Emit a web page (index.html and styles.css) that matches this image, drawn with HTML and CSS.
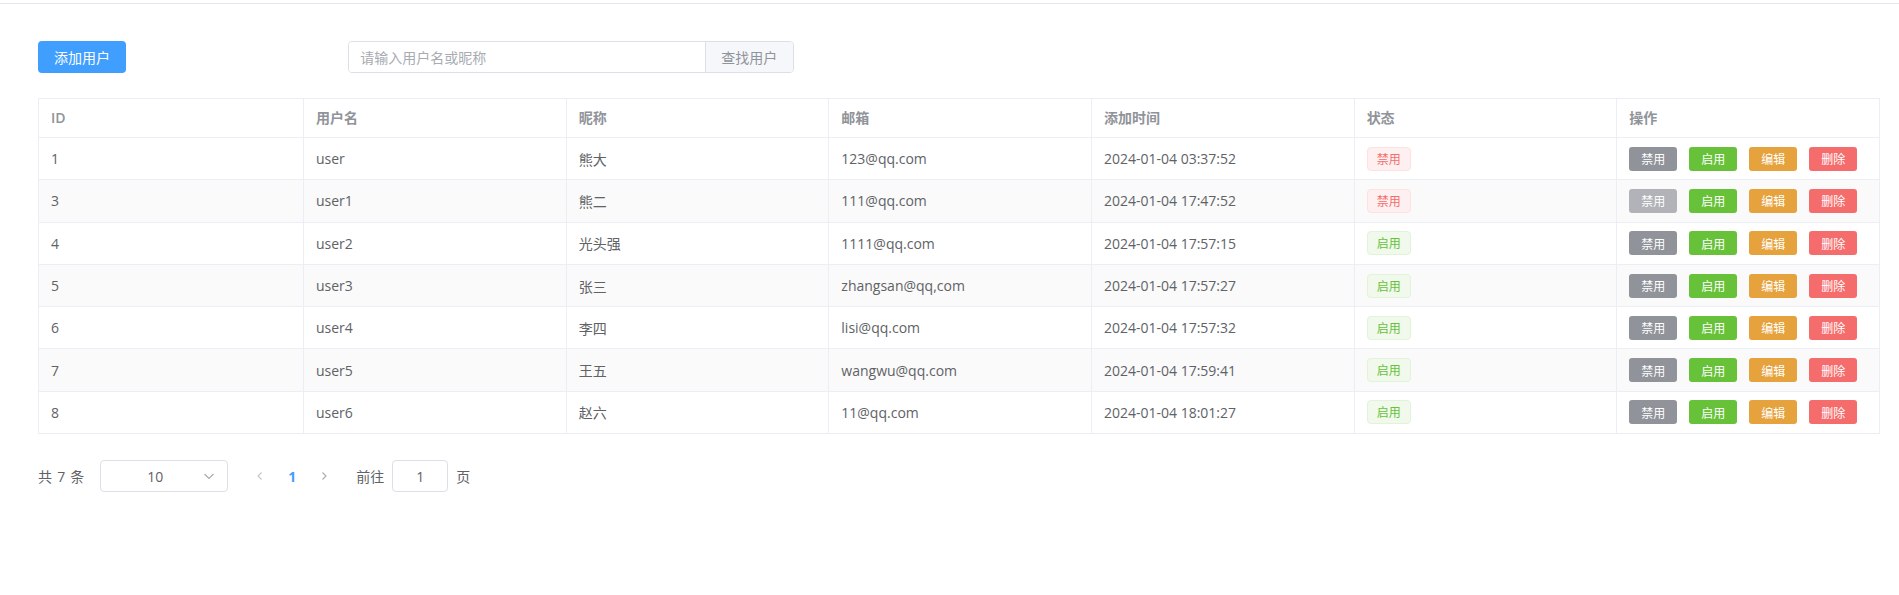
FILE: index.html
```html
<!DOCTYPE html>
<html lang="zh-CN">
<head>
<meta charset="utf-8">
<title>用户管理</title>
<link rel="stylesheet" href="styles.css">
</head>
<body>
<div class="topbar"></div>
<main class="page">
  <div class="toolbar">
    <div class="col-add"><button class="btn btn-primary">添加用户</button></div>
    <div class="search">
      <input class="search-input" type="text" placeholder="请输入用户名或昵称">
      <button class="search-append">查找用户</button>
    </div>
  </div>

  <table class="grid">
    <colgroup>
      <col class="col-first">
      <col><col><col><col><col><col>
    </colgroup>
    <thead>
      <tr>
        <th><div class="cell">ID</div></th>
        <th><div class="cell">用户名</div></th>
        <th><div class="cell">昵称</div></th>
        <th><div class="cell">邮箱</div></th>
        <th><div class="cell">添加时间</div></th>
        <th><div class="cell">状态</div></th>
        <th><div class="cell">操作</div></th>
      </tr>
    </thead>
    <tbody>
      <tr>
        <td><div class="cell">1</div></td>
        <td><div class="cell">user</div></td>
        <td><div class="cell">熊大</div></td>
        <td><div class="cell">123@qq.com</div></td>
        <td><div class="cell">2024-01-04 03:37:52</div></td>
        <td><div class="cell"><span class="tag tag-danger">禁用</span></div></td>
        <td><div class="cell ops"><button class="btn-s info">禁用</button><button class="btn-s success">启用</button><button class="btn-s warning">编辑</button><button class="btn-s danger">删除</button></div></td>
      </tr>
      <tr class="stripe">
        <td><div class="cell">3</div></td>
        <td><div class="cell">user1</div></td>
        <td><div class="cell">熊二</div></td>
        <td><div class="cell">111@qq.com</div></td>
        <td><div class="cell">2024-01-04 17:47:52</div></td>
        <td><div class="cell"><span class="tag tag-danger">禁用</span></div></td>
        <td><div class="cell ops"><button class="btn-s info disabled">禁用</button><button class="btn-s success">启用</button><button class="btn-s warning">编辑</button><button class="btn-s danger">删除</button></div></td>
      </tr>
      <tr>
        <td><div class="cell">4</div></td>
        <td><div class="cell">user2</div></td>
        <td><div class="cell">光头强</div></td>
        <td><div class="cell">1111@qq.com</div></td>
        <td><div class="cell">2024-01-04 17:57:15</div></td>
        <td><div class="cell"><span class="tag tag-success">启用</span></div></td>
        <td><div class="cell ops"><button class="btn-s info">禁用</button><button class="btn-s success">启用</button><button class="btn-s warning">编辑</button><button class="btn-s danger">删除</button></div></td>
      </tr>
      <tr class="stripe">
        <td><div class="cell">5</div></td>
        <td><div class="cell">user3</div></td>
        <td><div class="cell">张三</div></td>
        <td><div class="cell">zhangsan@qq,com</div></td>
        <td><div class="cell">2024-01-04 17:57:27</div></td>
        <td><div class="cell"><span class="tag tag-success">启用</span></div></td>
        <td><div class="cell ops"><button class="btn-s info">禁用</button><button class="btn-s success">启用</button><button class="btn-s warning">编辑</button><button class="btn-s danger">删除</button></div></td>
      </tr>
      <tr>
        <td><div class="cell">6</div></td>
        <td><div class="cell">user4</div></td>
        <td><div class="cell">李四</div></td>
        <td><div class="cell">lisi@qq.com</div></td>
        <td><div class="cell">2024-01-04 17:57:32</div></td>
        <td><div class="cell"><span class="tag tag-success">启用</span></div></td>
        <td><div class="cell ops"><button class="btn-s info">禁用</button><button class="btn-s success">启用</button><button class="btn-s warning">编辑</button><button class="btn-s danger">删除</button></div></td>
      </tr>
      <tr class="stripe">
        <td><div class="cell">7</div></td>
        <td><div class="cell">user5</div></td>
        <td><div class="cell">王五</div></td>
        <td><div class="cell">wangwu@qq.com</div></td>
        <td><div class="cell">2024-01-04 17:59:41</div></td>
        <td><div class="cell"><span class="tag tag-success">启用</span></div></td>
        <td><div class="cell ops"><button class="btn-s info">禁用</button><button class="btn-s success">启用</button><button class="btn-s warning">编辑</button><button class="btn-s danger">删除</button></div></td>
      </tr>
      <tr>
        <td><div class="cell">8</div></td>
        <td><div class="cell">user6</div></td>
        <td><div class="cell">赵六</div></td>
        <td><div class="cell">11@qq.com</div></td>
        <td><div class="cell">2024-01-04 18:01:27</div></td>
        <td><div class="cell"><span class="tag tag-success">启用</span></div></td>
        <td><div class="cell ops"><button class="btn-s info">禁用</button><button class="btn-s success">启用</button><button class="btn-s warning">编辑</button><button class="btn-s danger">删除</button></div></td>
      </tr>
    </tbody>
  </table>

  <div class="pager">
    <span class="total">共 7 条</span>
    <div class="sizes">
      <span class="sizes-value">10</span>
      <svg class="sizes-arrow" width="14" height="14" viewBox="0 0 14 14"><path d="M2.5 5 L7 9.5 L11.5 5" fill="none" stroke="#a8abb2" stroke-width="1.2"/></svg>
    </div>
    <button class="pg-btn" aria-label="上一页"><svg width="12" height="12" viewBox="0 0 12 12"><path d="M7.5 2.5 L4 6 L7.5 9.5" fill="none" stroke="#c0c4cc" stroke-width="1.1"/></svg></button>
    <span class="pg-num">1</span>
    <button class="pg-btn" aria-label="下一页"><svg width="12" height="12" viewBox="0 0 12 12"><path d="M4.5 2.5 L8 6 L4.5 9.5" fill="none" stroke="#a8abb2" stroke-width="1.1"/></svg></button>
    <span class="jump">前往</span>
    <input class="jump-input" type="text" value="1">
    <span class="jump-page">页</span>
  </div>
</main>
</body>
</html>
```

FILE: styles.css
```css
* { box-sizing: border-box; }

body {
  margin: 0;
  background: #fff;
  font-family: "Open Sans", "Noto Sans CJK SC", sans-serif;
  font-size: 14px;
  color: #606266;
}

.topbar {
  height: 4px;
  border-bottom: 1px solid #e4e7ed;
}

.page {
  padding: 37px 19px 0 38px;
}

.toolbar {
  display: flex;
  align-items: center;
  height: 32px;
}

.col-add {
  width: 310.3px;
  flex: none;
}

.btn {
  font-family: inherit;
  border: none;
  cursor: pointer;
}

.btn-primary {
  height: 32px;
  padding: 0 16px;
  background: #409eff;
  color: #fff;
  font-size: 14px;
  border-radius: 4px;
  font-family: "Noto Sans CJK SC", sans-serif;
}

.search {
  display: flex;
  width: 445.5px;
  height: 32px;
  border: 1px solid #dcdfe6;
  border-radius: 4px;
  overflow: hidden;
}

.search-input {
  flex: 1;
  min-width: 0;
  border: none;
  outline: none;
  padding: 0 11px;
  font-size: 14px;
  font-family: "Noto Sans CJK SC", sans-serif;
  color: #606266;
  background: #fff;
}

.search-input::placeholder {
  color: #a8abb2;
}

.search-append {
  width: 88px;
  flex: none;
  border: none;
  border-left: 1px solid #dcdfe6;
  background: #f5f7fa;
  color: #909399;
  font-size: 14px;
  font-family: "Noto Sans CJK SC", sans-serif;
  padding: 0;
}

.grid {
  width: 100%;
  margin-top: 25px;
  table-layout: fixed;
  border-collapse: separate;
  border-spacing: 0;
  border-top: 1px solid #ebeef5;
  border-left: 1px solid #ebeef5;
}

.grid .col-first {
  width: 265px;
}

.grid th,
.grid td {
  padding: 0;
  border-right: 1px solid #ebeef5;
  border-bottom: 1px solid #ebeef5;
  text-align: left;
  vertical-align: middle;
}

.grid th .cell {
  height: 38px;
  line-height: 38px;
  padding: 0 12px;
  color: #909399;
  font-weight: 600;
  white-space: nowrap;
}

.grid td .cell {
  height: 41.3px;
  display: flex;
  align-items: center;
  padding: 0 12px;
  color: #606266;
  white-space: nowrap;
}

.grid tr.stripe td {
  background: #fafafa;
}

.tag {
  display: inline-flex;
  align-items: center;
  height: 24px;
  padding: 0 9px;
  font-size: 12px;
  border-radius: 4px;
  border: 1px solid;
}

.tag-danger {
  background: #fef0f0;
  border-color: #fde2e2;
  color: #f56c6c;
}

.tag-success {
  background: #f0f9eb;
  border-color: #e1f3d8;
  color: #67c23a;
}

.ops {
  gap: 12px;
}

.btn-s {
  width: 48px;
  height: 24px;
  padding: 0;
  border: none;
  border-radius: 3px;
  color: #fff;
  font-size: 12px;
  font-family: "Noto Sans CJK SC", sans-serif;
}

.btn-s.info { background: #909399; }
.btn-s.info.disabled { background: #b1b3b8; }
.btn-s.success { background: #67c23a; }
.btn-s.warning { background: #e6a23c; }
.btn-s.danger { background: #f56c6c; }

.pager {
  display: flex;
  align-items: center;
  height: 32px;
  margin-top: 26px;
  color: #606266;
  font-size: 14px;
}

.total {
  margin-right: 16px;
  word-spacing: 1.5px;
}

.sizes {
  position: relative;
  width: 128px;
  height: 32px;
  border: 1px solid #dcdfe6;
  border-radius: 4px;
  display: flex;
  align-items: center;
  padding-left: 12px;
  padding-right: 30px;
  margin-right: 16px;
}

.sizes-value {
  flex: 1;
  text-align: center;
}

.sizes-arrow {
  position: absolute;
  right: 11px;
  top: 8px;
}

.pg-btn {
  width: 32px;
  height: 32px;
  padding: 0;
  border: none;
  background: transparent;
  display: flex;
  align-items: center;
  justify-content: center;
}

.pg-num {
  width: 32px;
  text-align: center;
  color: #409eff;
  font-weight: 700;
}

.jump {
  margin-left: 16px;
  font-family: "Noto Sans CJK SC", sans-serif;
}

.jump-input {
  width: 56px;
  height: 32px;
  margin: 0 8px;
  border: 1px solid #dcdfe6;
  border-radius: 4px;
  text-align: center;
  font-size: 14px;
  font-family: inherit;
  color: #606266;
  outline: none;
}

.jump-page {
  font-family: "Noto Sans CJK SC", sans-serif;
}
```
